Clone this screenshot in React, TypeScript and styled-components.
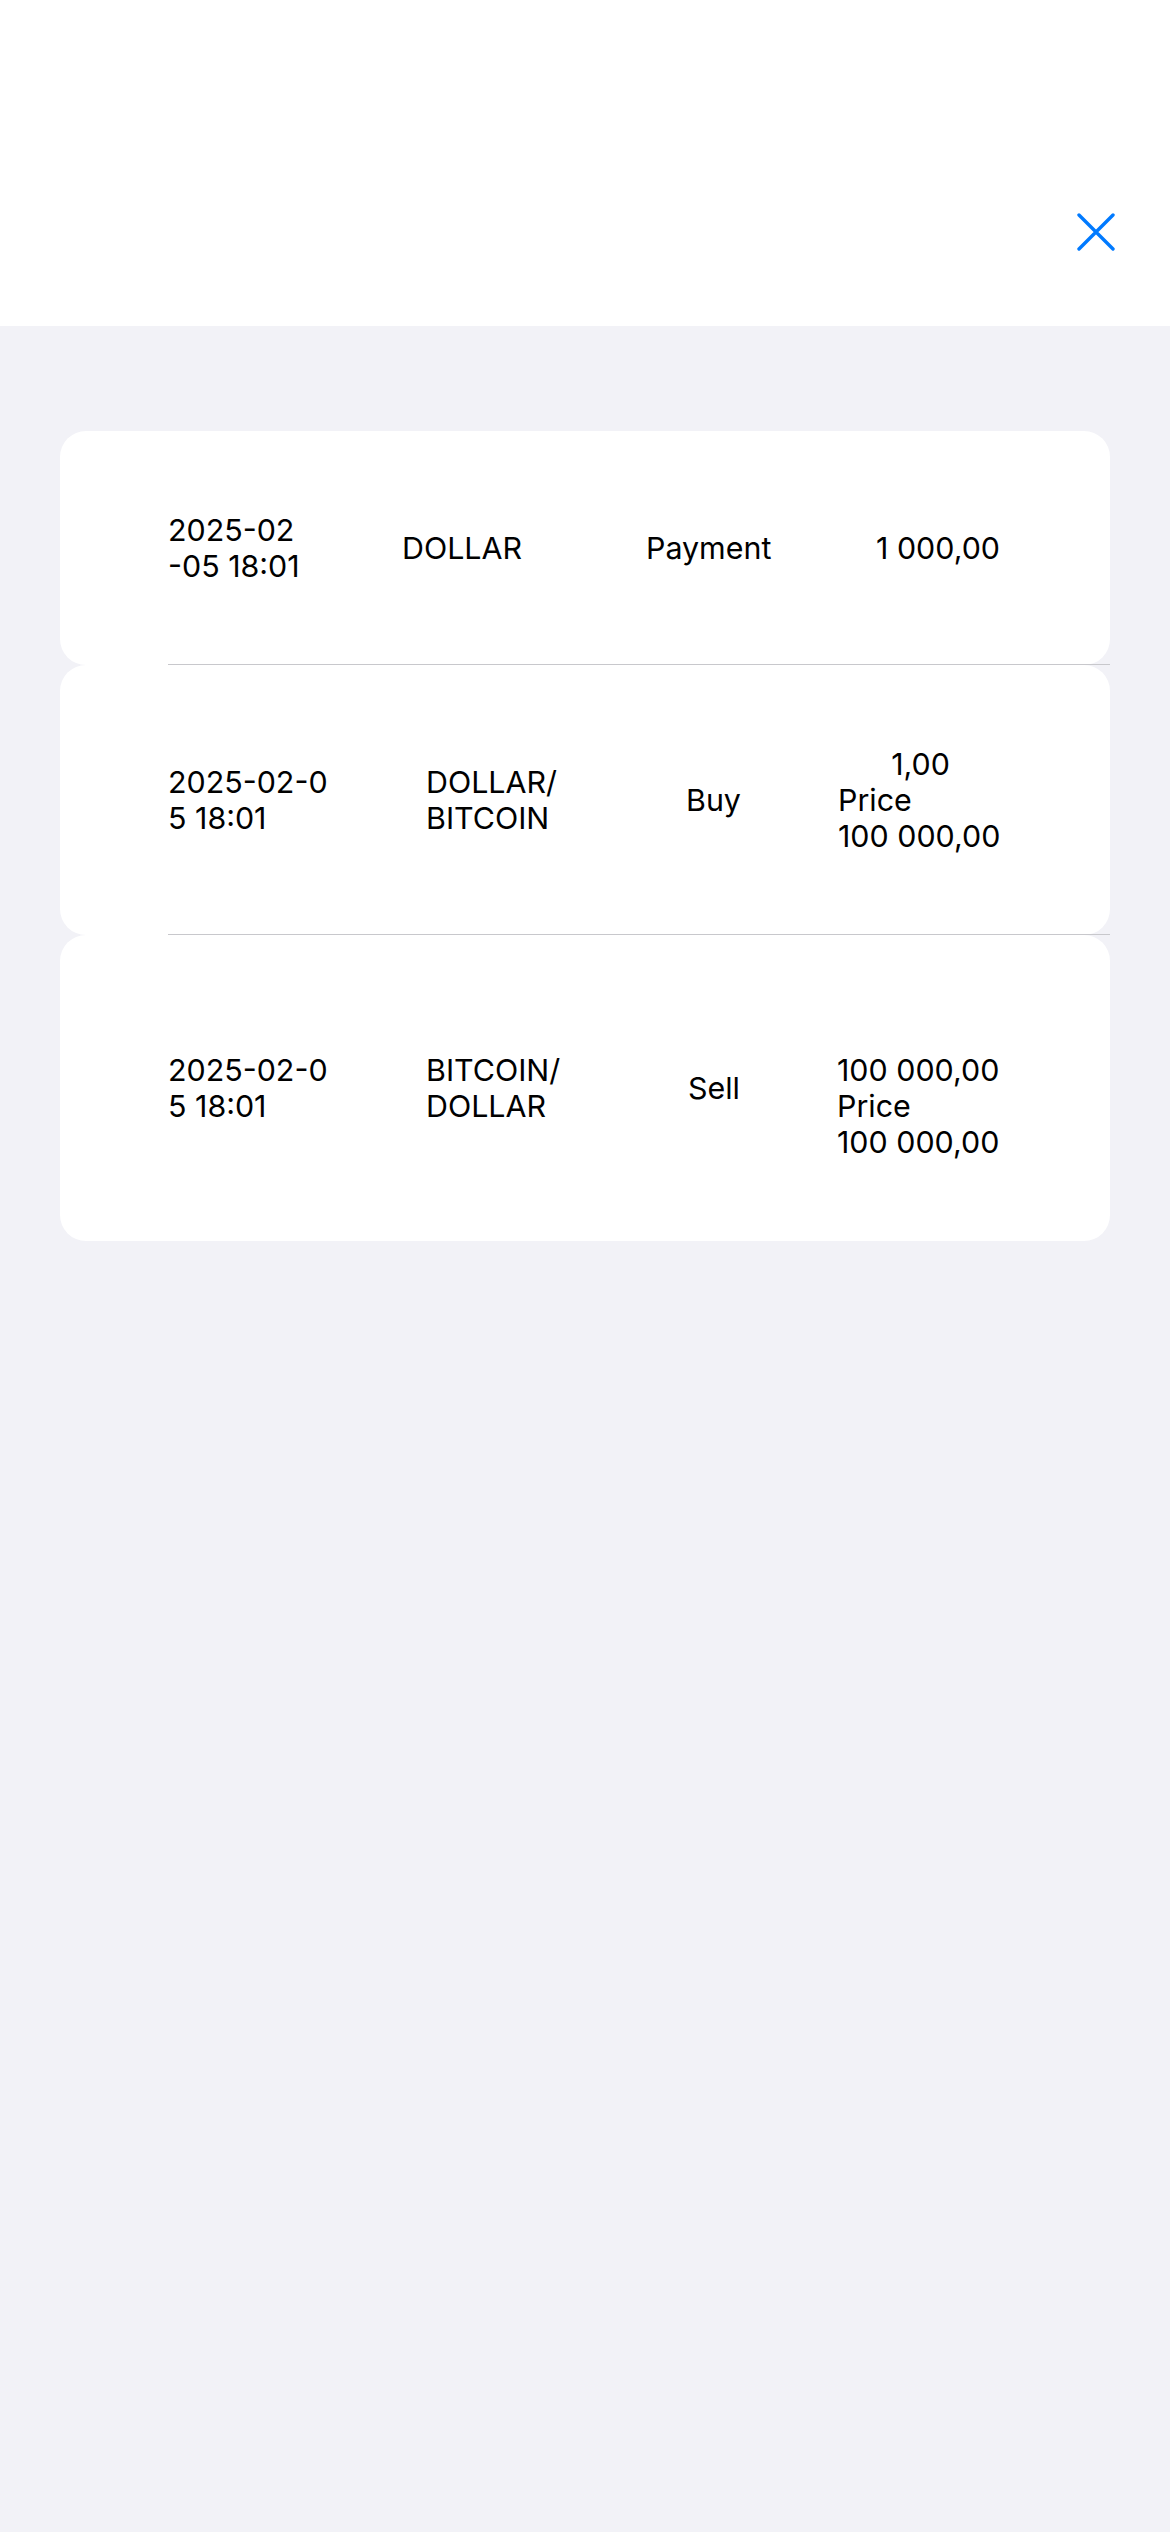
import React from "react";
import styled, { createGlobalStyle } from "styled-components";

const Global = createGlobalStyle`
  html, body {
    margin: 0;
    padding: 0;
    background: #f2f2f7;
  }
  body {
    font-family: Inter, "Noto Sans", "Liberation Sans", sans-serif;
    color: #000;
    -webkit-font-smoothing: antialiased;
  }
`;

const Screen = styled.div`
  width: 1170px;
  min-height: 2532px;
  background: #f2f2f7;
  display: flex;
  flex-direction: column;
`;

const Header = styled.header`
  height: 326px;
  background: #ffffff;
  display: flex;
  justify-content: flex-end;
  align-items: flex-start;
  padding: 213px 55px 0 0;
  box-sizing: border-box;
`;

const CloseButton = styled.button`
  width: 38px;
  height: 38px;
  padding: 0;
  border: none;
  background: transparent;
  color: #007aff;
  cursor: pointer;
  display: flex;
`;

const List = styled.div`
  display: flex;
  flex-direction: column;
  margin: 105px 60px 0 60px;
`;

const Row = styled.div<{ $cols: string; $separator?: boolean }>`
  position: relative;
  background: #ffffff;
  border-radius: 26px;
  display: grid;
  grid-template-columns: ${(p) => p.$cols};
  align-items: center;
  padding: 81px 0 81px 108px;
  box-sizing: border-box;
  font-size: 30.4px;
  line-height: 36px;
  letter-spacing: 0;

  &::after {
    content: "";
    display: ${(p) => (p.$separator ? "block" : "none")};
    position: absolute;
    z-index: 1;
    left: 108px;
    right: 0;
    bottom: 0;
    height: 1.5px;
    background: #c8c8cc;
  }
`;

const Cell = styled.div`
  white-space: nowrap;
`;

const Stack = styled.div`
  display: flex;
  flex-direction: column;
  width: 165px;
`;

const Centered = styled.div`
  text-align: center;
  min-height: 36px;
`;

type Tx = {
  cols: string;
  date: [string, string];
  pair: string[];
  type: string;
  top?: string;
  value: string[];
};

const rows: Tx[] = [
  {
    cols: "234px 244px 230px 1fr",
    date: ["2025-02", "-05 18:01"],
    pair: ["DOLLAR"],
    type: "Payment",
    value: ["1 000,00"],
  },
  {
    cols: "258px 260px 152px 1fr",
    date: ["2025-02-0", "5 18:01"],
    pair: ["DOLLAR/", "BITCOIN"],
    type: "Buy",
    top: "1,00",
    value: ["Price", "100 000,00"],
  },
  {
    cols: "258px 262px 149px 1fr",
    date: ["2025-02-0", "5 18:01"],
    pair: ["BITCOIN/", "DOLLAR"],
    type: "Sell",
    top: "",
    value: ["100 000,00", "Price", "100 000,00"],
  },
];

export default function App() {
  return (
    <>
      <Global />
      <Screen>
        <Header>
          <CloseButton aria-label="Close">
            <svg width="38" height="38" viewBox="0 0 38 38" fill="none">
              <path
                d="M2 2 L36 36 M36 2 L2 36"
                stroke="currentColor"
                strokeWidth="3.4"
                strokeLinecap="round"
              />
            </svg>
          </CloseButton>
        </Header>
        <List>
          {rows.map((r, i) => (
            <Row key={i} $cols={r.cols} $separator={i < rows.length - 1}>
              <Cell>
                {r.date[0]}
                <br />
                {r.date[1]}
              </Cell>
              <Cell>
                {r.pair.map((p, j) => (
                  <div key={j}>{p}</div>
                ))}
              </Cell>
              <Cell>{r.type}</Cell>
              <Stack>
                {r.top !== undefined && <Centered>{r.top}</Centered>}
                {r.value.map((v, j) => (
                  <Cell key={j}>{v}</Cell>
                ))}
              </Stack>
            </Row>
          ))}
        </List>
      </Screen>
    </>
  );
}
